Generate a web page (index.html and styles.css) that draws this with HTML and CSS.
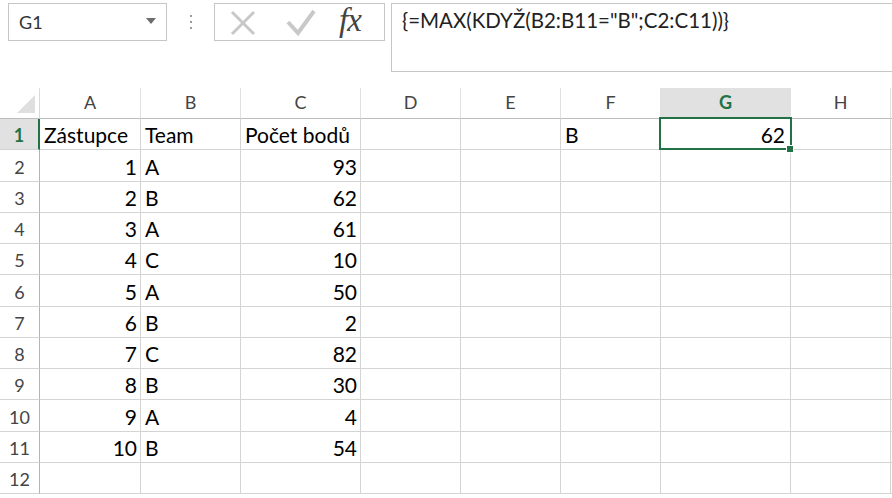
FILE: index.html
```html
<!DOCTYPE html>
<html lang="cs">
<head>
  <meta charset="UTF-8" />
  <title>Sešit1 - Excel</title>
  <link rel="stylesheet" href="styles.css">
</head>
<body>

  <div class="toolbar">
    <div class="namebox">
      <span>G1</span>
      <svg class="drop" width="10" height="6" viewBox="0 0 10 6"><polygon points="0,0 10,0 5,6" fill="#6d6d6d"/></svg>
    </div>
    <div class="grip"><i></i><i></i><i></i></div>
    <div class="fxbox">
      <svg width="28" height="28" viewBox="0 0 28 28"><path d="M3 4 L25 26 M25 4 L3 26" stroke="#c8c8c8" stroke-width="3" fill="none"/></svg>
      <svg width="32" height="28" viewBox="0 0 32 28"><path d="M3 14 L13 25 L29 3" stroke="#c8c8c8" stroke-width="4" fill="none"/></svg>
      <span class="fx">fx</span>
    </div>
    <div class="formula">{=MAX(KDYŽ(B2:B11="B";C2:C11))}</div>
  </div>

  <div class="sheet">
    <div class="c corner"><svg width="18" height="18" viewBox="0 0 18 18"><polygon points="18,0 18,18 0,18" fill="#dfdfdf"/></svg></div>
    <div class="c ch">A</div>
    <div class="c ch">B</div>
    <div class="c ch">C</div>
    <div class="c ch">D</div>
    <div class="c ch">E</div>
    <div class="c ch">F</div>
    <div class="c ch active">G</div>
    <div class="c ch">H</div>
    <div class="c ch"></div>

    <div class="c rh active">1</div>
    <div class="c">Zástupce</div>
    <div class="c">Team</div>
    <div class="c">Počet bodů</div>
    <div class="c"></div>
    <div class="c"></div>
    <div class="c">B</div>
    <div class="c num sel">62<span class="handle"></span></div>
    <div class="c"></div>
    <div class="c"></div>

    <div class="c rh">2</div>
    <div class="c num">1</div>
    <div class="c">A</div>
    <div class="c num">93</div>
    <div class="c"></div><div class="c"></div><div class="c"></div><div class="c"></div><div class="c"></div><div class="c"></div>

    <div class="c rh">3</div>
    <div class="c num">2</div>
    <div class="c">B</div>
    <div class="c num">62</div>
    <div class="c"></div><div class="c"></div><div class="c"></div><div class="c"></div><div class="c"></div><div class="c"></div>

    <div class="c rh">4</div>
    <div class="c num">3</div>
    <div class="c">A</div>
    <div class="c num">61</div>
    <div class="c"></div><div class="c"></div><div class="c"></div><div class="c"></div><div class="c"></div><div class="c"></div>

    <div class="c rh">5</div>
    <div class="c num">4</div>
    <div class="c">C</div>
    <div class="c num">10</div>
    <div class="c"></div><div class="c"></div><div class="c"></div><div class="c"></div><div class="c"></div><div class="c"></div>

    <div class="c rh">6</div>
    <div class="c num">5</div>
    <div class="c">A</div>
    <div class="c num">50</div>
    <div class="c"></div><div class="c"></div><div class="c"></div><div class="c"></div><div class="c"></div><div class="c"></div>

    <div class="c rh">7</div>
    <div class="c num">6</div>
    <div class="c">B</div>
    <div class="c num">2</div>
    <div class="c"></div><div class="c"></div><div class="c"></div><div class="c"></div><div class="c"></div><div class="c"></div>

    <div class="c rh">8</div>
    <div class="c num">7</div>
    <div class="c">C</div>
    <div class="c num">82</div>
    <div class="c"></div><div class="c"></div><div class="c"></div><div class="c"></div><div class="c"></div><div class="c"></div>

    <div class="c rh">9</div>
    <div class="c num">8</div>
    <div class="c">B</div>
    <div class="c num">30</div>
    <div class="c"></div><div class="c"></div><div class="c"></div><div class="c"></div><div class="c"></div><div class="c"></div>

    <div class="c rh">10</div>
    <div class="c num">9</div>
    <div class="c">A</div>
    <div class="c num">4</div>
    <div class="c"></div><div class="c"></div><div class="c"></div><div class="c"></div><div class="c"></div><div class="c"></div>

    <div class="c rh">11</div>
    <div class="c num">10</div>
    <div class="c">B</div>
    <div class="c num">54</div>
    <div class="c"></div><div class="c"></div><div class="c"></div><div class="c"></div><div class="c"></div><div class="c"></div>

    <div class="c rh">12</div>
    <div class="c"></div><div class="c"></div><div class="c"></div><div class="c"></div><div class="c"></div><div class="c"></div><div class="c"></div><div class="c"></div><div class="c"></div>
  </div>

</body>
</html>
```

FILE: styles.css
```css
body { margin: 0; background: #fff; font-family: Lato, "Open Sans", sans-serif; color: #000; overflow: hidden; width: 892px; height: 498px; }

.toolbar { display: flex; align-items: flex-start; height: 88px; padding-top: 3px; box-sizing: border-box; }
.namebox { margin-left: 8px; width: 159px; height: 38px; box-sizing: border-box; border: 1px solid #c6c6c6; display: flex; align-items: center; justify-content: space-between; padding: 0 10px 0 10px; font-size: 18px; color: #333; }
.namebox .drop { margin-top: -2px; }
.grip { width: 47px; height: 38px; display: flex; flex-direction: column; align-items: center; justify-content: center; gap: 4px; }
.grip i { width: 2px; height: 2px; background: #9a9a9a; }
.fxbox { width: 171px; height: 38px; box-sizing: border-box; border: 1px solid #c6c6c6; display: flex; align-items: center; padding-left: 14px; gap: 26px; }
.fxbox svg:first-child { margin-right: 2px; }
.fx { font-family: "Liberation Serif", serif; font-style: italic; font-size: 33px; color: #444; margin-left: -4px; margin-top: -4px; letter-spacing: -1px; }
.formula { flex: 1; margin-left: 6px; margin-right: -4px; height: 69px; box-sizing: border-box; border: 1px solid #c6c6c6; padding: 4px 10px; font-size: 20.5px; color: #222; }

.sheet { display: grid; grid-template-columns: 40px 101px 100px 120px 100px 100px 100px 130px 100px 1fr; grid-template-rows: 31px repeat(12, 31.25px); }
.c { border-right: 1px solid #d4d4d4; border-bottom: 1px solid #d4d4d4; display: flex; align-items: flex-end; padding: 0 4px 2px; font-size: 21px; white-space: nowrap; overflow: hidden; min-width: 0; }
.num { justify-content: flex-end; padding-right: 3px; }

.corner { justify-content: flex-end; padding: 0 4px 5px 0; border-right-color: #dadada; border-bottom-color: #bdbdbd; }
.ch { justify-content: center; font-size: 18px; color: #444; padding-bottom: 5px; border-right-color: #e0e0e0; border-bottom-color: #bdbdbd; }
.rh { justify-content: center; font-size: 18px; color: #444; padding: 0 0 3px; border-right-color: #b4b4b4; }
.ch.active, .rh.active { background: #e1e1e1; color: #217346; font-weight: bold; }
.rh.active { border-right: 2px solid #217346; }

.sel { position: relative; overflow: visible; padding-right: 5px; }
.sel::after { content: ""; position: absolute; top: -2px; left: -2px; right: -2px; bottom: -1px; border: 2px solid #217346; pointer-events: none; }
.handle { position: absolute; right: -4px; bottom: -4px; width: 6px; height: 6px; background: #217346; border: 1px solid #fff; z-index: 1; }
```
